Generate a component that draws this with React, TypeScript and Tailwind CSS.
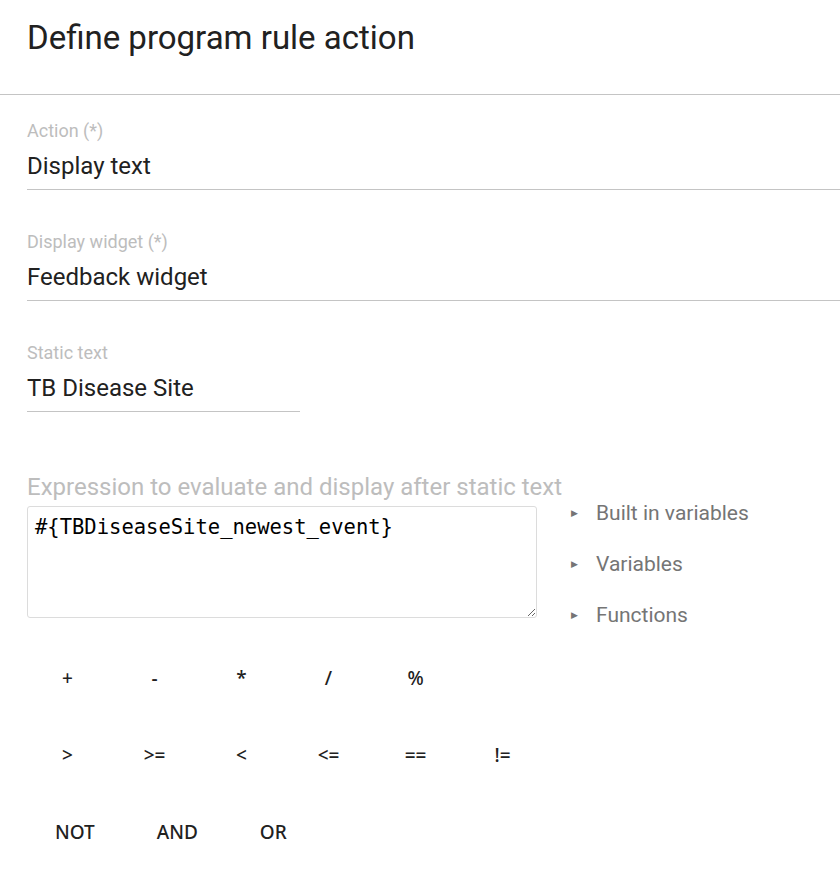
import React from "react";

const fieldCls = "mt-[42px]";

function Field({ label, value, short, first }: { label: string; value: string; short?: boolean; first?: boolean }) {
    return (
        <div className={first ? "mt-[26px]" : fieldCls}>
            <div className="text-[18px] leading-[20px] text-[#bdbdbd]">{label}</div>
            <div
                className={
                    "mt-[10px] pb-[8px] border-b border-[#c4c4c4] " +
                    (short ? "w-[273px]" : "mr-[-27px]")
                }
            >
                <div className="text-[24px] leading-[30px] text-[#212121]">{value}</div>
            </div>
        </div>
    );
}

const opsRow1 = ["+", "-", "*", "/", "%"];
const opsRow2 = [">", ">=", "<", "<=", "==", "!="];
const opsRow3 = ["NOT", "AND", "OR"];

export default function App() {
    return (
        <div className="w-[840px] h-[878px] bg-white overflow-hidden" style={{ fontFamily: "Roboto, 'Noto Sans', sans-serif" }}>
            {/* Title */}
            <div className="h-[95px] border-b border-[#c4c4c4] px-[27px] pt-[18px]">
                <h1 className="text-[33px] leading-[40px] text-[#212121]">Define program rule action</h1>
            </div>

            <div className="px-[27px]">
                <Field first label="Action (*)" value="Display text" />
                <Field label="Display widget (*)" value="Feedback widget" />
                <Field label="Static text" value="TB Disease Site" short />

                {/* Expression */}
                <div className="mt-[61px] text-[24px] leading-[28px] text-[#bdbdbd]">
                    Expression to evaluate and display after static text
                </div>
                <div className="flex">
                    <textarea
                        defaultValue="#{TBDiseaseSite_newest_event}"
                        className="mt-[5px] w-[510px] h-[112px] border border-[#dcdcdc] rounded-[3px] px-[7px] pt-[8px] text-[20.5px] leading-[24px] text-black outline-none"
                        style={{ fontFamily: "'DejaVu Sans Mono', monospace", resize: "both" }}
                    />
                    <div className="ml-[34px] flex flex-col gap-[27px] text-[21px] leading-[24px] text-[#757575]">
                        {["Built in variables", "Variables", "Functions"].map((t) => (
                            <div key={t} className="flex items-center">
                                <span className="text-[9px] mr-[18px] text-[#757575]">&#9654;</span>
                                {t}
                            </div>
                        ))}
                    </div>
                </div>
            </div>

            {/* Operators */}
            <div
                className="mt-[12px] pl-[24px] text-[19px] font-medium text-[#212121]"
                style={{ fontFamily: "'Noto Sans', 'Open Sans', sans-serif" }}
            >
                <div className="flex h-[78px] items-center">
                    {opsRow1.map((o) => (
                        <button key={o} className="w-[87px] h-[48px]">{o}</button>
                    ))}
                </div>
                <div className="flex h-[77px] items-center">
                    {opsRow2.map((o) => (
                        <button key={o} className="w-[87px] h-[48px]">{o}</button>
                    ))}
                </div>
                <div className="flex h-[77px] items-center">
                    {opsRow3.map((o) => (
                        <button key={o} className="min-w-[87px] px-[31px] h-[48px]">{o}</button>
                    ))}
                </div>
            </div>
        </div>
    );
}
